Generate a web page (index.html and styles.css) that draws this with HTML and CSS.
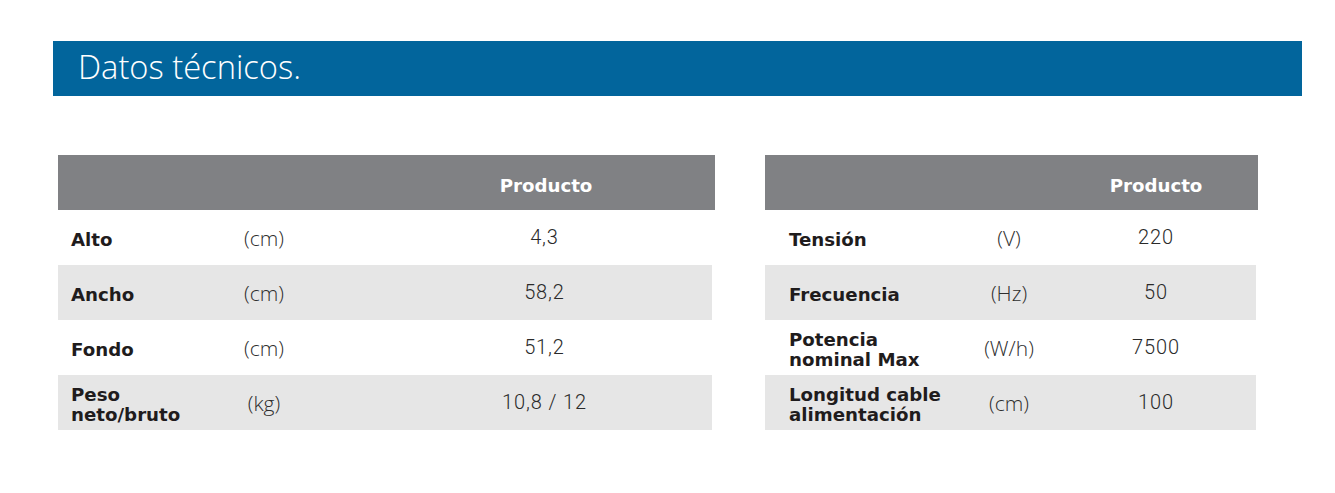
FILE: index.html
```html
<!DOCTYPE html>
<html lang="es">
<head>
<meta charset="utf-8">
<title>Datos técnicos</title>
<link rel="stylesheet" href="styles.css">
</head>
<body>
<div class="page">
  <div class="banner"><h1 class="banner-title">Datos técnicos.</h1></div>
  <div class="tables">
    <div class="table table-left">
      <div class="row head"><span></span><span></span><span class="val head-val">Producto</span></div>
      <div class="row"><span class="lbl">Alto</span><span class="unit">(cm)</span><span class="val">4,3</span></div>
      <div class="row alt"><span class="lbl">Ancho</span><span class="unit">(cm)</span><span class="val">58,2</span></div>
      <div class="row"><span class="lbl">Fondo</span><span class="unit">(cm)</span><span class="val">51,2</span></div>
      <div class="row alt"><span class="lbl">Peso<br>neto/bruto</span><span class="unit">(kg)</span><span class="val">10,8 / 12</span></div>
    </div>
    <div class="table table-right">
      <div class="row head"><span></span><span></span><span class="val head-val">Producto</span></div>
      <div class="row"><span class="lbl">Tensión</span><span class="unit">(V)</span><span class="val">220</span></div>
      <div class="row alt"><span class="lbl">Frecuencia</span><span class="unit">(Hz)</span><span class="val">50</span></div>
      <div class="row"><span class="lbl">Potencia<br>nominal Max</span><span class="unit">(W/h)</span><span class="val">7500</span></div>
      <div class="row alt"><span class="lbl">Longitud cable<br>alimentación</span><span class="unit">(cm)</span><span class="val">100</span></div>
    </div>
  </div>
</div>
</body>
</html>
```

FILE: styles.css
```css
* { box-sizing: border-box; }
html, body { margin: 0; padding: 0; background: #ffffff; }
.page {
  padding: 41px 33px 0 53px;
  font-family: "Open Sans", sans-serif;
}
.banner {
  height: 55px;
  background: #02659c;
  display: flex;
  align-items: center;
  padding-left: 25px;
}
.banner-title {
  margin: 0;
  color: #ffffff;
  font-family: "Open Sans", sans-serif;
  font-weight: 300;
  font-size: 32.7px;
  line-height: 1;
  padding-bottom: 2px;
}
.tables {
  display: flex;
  gap: 50px;
  margin-top: 59px;
  padding-left: 5px;
}
.table { display: flex; flex-direction: column; }
.table-left { width: 657px; }
.table-right { width: 493px; }
.row {
  display: grid;
  height: 55px;
  align-items: center;
  padding-top: 5px;
}
.table-left .row { grid-template-columns: 156px 100px 1fr; }
.table-right .row { grid-template-columns: 185px 118px 176px 1fr; }
.table-left .row:not(.head) { margin-right: 3px; }
.table-right .row:not(.head) { margin-right: 2px; }
.row.head { background: #808184; padding-top: 6px; }
.row.alt { background: #e6e6e6; }
.lbl {
  font-family: "DejaVu Sans", sans-serif;
  font-weight: 700;
  font-size: 18.2px;
  line-height: 20px;
  color: #1f1c1d;
}
.table-left .lbl { padding-left: 13px; }
.table-right .lbl { padding-left: 24px; }
.unit {
  text-align: center;
  font-family: "Open Sans", sans-serif;
  font-weight: 300;
  font-size: 21px;
  color: #2e2e2e;
  margin-top: -5px;
}
.val {
  text-align: center;
  font-family: "Roboto", sans-serif;
  font-weight: 300;
  font-size: 20px;
  letter-spacing: 0.9px;
  color: #2a2a2a;
  margin-top: -7px;
}
.table-left .val { padding-left: 63px; }
.head-val {
  margin-top: 0;
  font-family: "DejaVu Sans", sans-serif;
  font-weight: 700;
  font-size: 18.2px;
  letter-spacing: 0;
  color: #ffffff;
}
```
